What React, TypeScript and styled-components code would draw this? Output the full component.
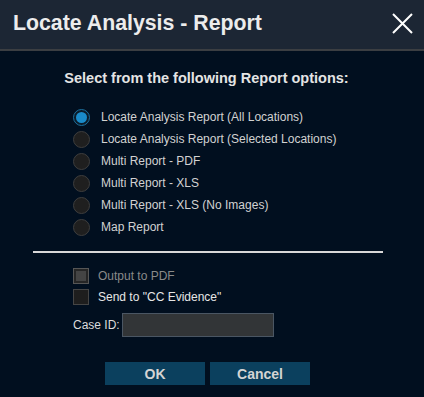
import styled, { createGlobalStyle } from "styled-components";
import { FC } from "react";

const GlobalStyle = createGlobalStyle`
  html, body {
    margin: 0;
    padding: 0;
    background: #010f1f;
  }
  body {
    font-family: "Liberation Sans", Arial, sans-serif;
  }
`;

const Dialog = styled.div`
  width: 424px;
  height: 397px;
  background: #010f1f;
  display: flex;
  flex-direction: column;
  overflow: hidden;
`;

const Header = styled.div`
  height: 49px;
  background: #1c2634;
  border-bottom: 2px solid #3b3e42;
  display: flex;
  align-items: center;
  justify-content: space-between;
  padding: 0 11px 0 13px;
  box-sizing: content-box;
`;

const Title = styled.h1`
  margin: 0 0 2px;
  font-size: 21.3px;
  font-weight: bold;
  color: #ececec;
`;

const CloseButton = styled.button`
  width: 22px;
  height: 22px;
  padding: 0;
  border: none;
  background: none;
  display: flex;
  align-items: center;
  justify-content: center;
  margin-bottom: 2px;
  cursor: pointer;
`;

const Body = styled.div`
  display: flex;
  flex-direction: column;
  padding-top: 19px;
`;

const Prompt = styled.div`
  font-size: 14.5px;
  font-weight: bold;
  color: #e4e4e4;
  line-height: 17px;
  text-align: center;
  padding-right: 11px;
`;

const OptionList = styled.div`
  display: flex;
  flex-direction: column;
  margin: 19px 0 0 73px;
`;

const OptionRow = styled.label`
  height: 22px;
  display: flex;
  align-items: center;
  gap: 11px;
  font-size: 12px;
  color: #d2d2d2;
`;

const Radio = styled.span<{ $checked: boolean }>`
  width: 17px;
  height: 17px;
  box-sizing: border-box;
  border-radius: 50%;
  border: 1px solid ${(p) => (p.$checked ? "#1c6f9c" : "#3e3e3e")};
  background: ${(p) => (p.$checked ? "#0b1c2a" : "#1f1f1f")};
  display: flex;
  align-items: center;
  justify-content: center;

  &::after {
    content: "";
    display: ${(p) => (p.$checked ? "block" : "none")};
    width: 11px;
    height: 11px;
    border-radius: 50%;
    background: #1a8bc9;
  }
`;

const Divider = styled.hr`
  margin: 13px 0 0 33px;
  width: 350px;
  height: 2px;
  border: none;
  background: #d8d8d8;
`;

const CheckList = styled.div`
  display: flex;
  flex-direction: column;
  gap: 5px;
  margin: 15px 0 0 73px;
`;

const CheckRow = styled.label<{ $disabled?: boolean }>`
  display: flex;
  align-items: center;
  gap: 9px;
  height: 16px;
  font-size: 12px;
  color: ${(p) => (p.$disabled ? "#8a8a8a" : "#e6e6e6")};
`;

const CheckBox = styled.span<{ $disabled?: boolean }>`
  width: 16px;
  height: 16px;
  box-sizing: border-box;
  border: 1px solid ${(p) => (p.$disabled ? "#565656" : "#454545")};
  background: ${(p) => (p.$disabled ? "#444" : "#1e1e1e")};
  box-shadow: ${(p) => (p.$disabled ? "inset 0 0 0 2px #262626" : "none")};
`;

const CaseRow = styled.div`
  display: flex;
  align-items: center;
  gap: 2px;
  margin: 8px 0 0 73px;
  font-size: 12px;
  color: #dcdcdc;
`;

const CaseInput = styled.input`
  width: 152px;
  height: 24px;
  box-sizing: border-box;
  background: #323537;
  border: 1px solid #4a5663;
  color: #ddd;
  padding: 0 4px;
  outline: none;
`;

const Buttons = styled.div`
  display: flex;
  gap: 5px;
  margin: 25px 0 0 105px;
`;

const Button = styled.button`
  width: 100px;
  height: 23px;
  padding: 0;
  border: none;
  background: #0b405e;
  color: #d4d4d4;
  font-family: inherit;
  font-size: 14px;
  font-weight: bold;
  cursor: pointer;
`;

const options = [
  "Locate Analysis Report (All Locations)",
  "Locate Analysis Report (Selected Locations)",
  "Multi Report - PDF",
  "Multi Report - XLS",
  "Multi Report - XLS (No Images)",
  "Map Report",
];

const CloseIcon: FC = () => (
  <svg width="21" height="21" viewBox="0 0 21 21">
    <path d="M1 1L20 20M20 1L1 20" stroke="#fff" strokeWidth="2" />
  </svg>
);

export default function App() {
  const selected = 0;

  return (
    <>
      <GlobalStyle />
      <Dialog>
        <Header>
          <Title>Locate Analysis - Report</Title>
          <CloseButton aria-label="Close">
            <CloseIcon />
          </CloseButton>
        </Header>
        <Body>
          <Prompt>Select from the following Report options:</Prompt>
          <OptionList>
            {options.map((o, i) => (
              <OptionRow key={o}>
                <Radio $checked={i === selected} />
                {o}
              </OptionRow>
            ))}
          </OptionList>
          <Divider />
          <CheckList>
            <CheckRow $disabled>
              <CheckBox $disabled />
              Output to PDF
            </CheckRow>
            <CheckRow>
              <CheckBox />
              Send to "CC Evidence"
            </CheckRow>
          </CheckList>
          <CaseRow>
            Case ID:
            <CaseInput />
          </CaseRow>
          <Buttons>
            <Button>OK</Button>
            <Button>Cancel</Button>
          </Buttons>
        </Body>
      </Dialog>
    </>
  );
}
